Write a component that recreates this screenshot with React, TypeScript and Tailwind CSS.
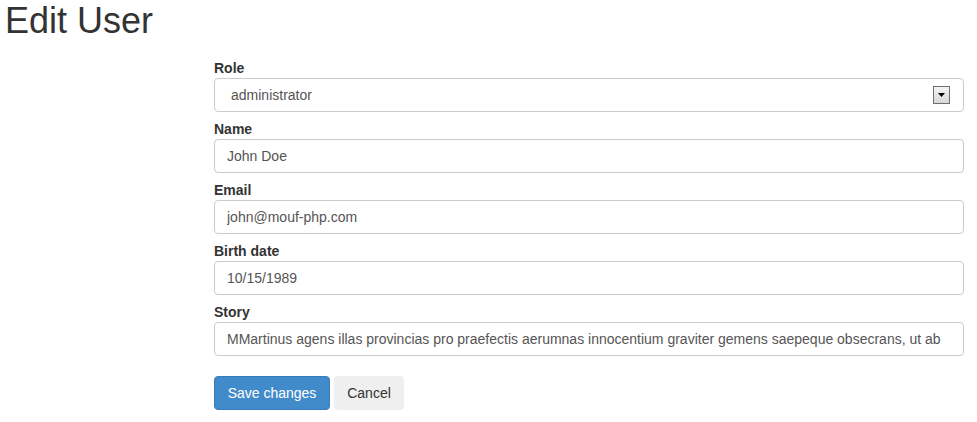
const fields = [
  { label: 'Name', value: 'John Doe' },
  { label: 'Email', value: 'john@mouf-php.com' },
  { label: 'Birth date', value: '10/15/1989' },
  {
    label: 'Story',
    value:
      'MMartinus agens illas provincias pro praefectis aerumnas innocentium graviter gemens saepeque obsecrans, ut ab',
  },
]

export default function App() {
  return (
    <div className="min-h-[422px] w-[977px] bg-white font-['Liberation_Sans',Arial,sans-serif] text-[14px] text-[#333]">
      {/* Header */}
      <h1 className="ml-[5px] pt-[1px] text-[36px] leading-[40px] font-normal text-[#333]">Edit User</h1>

      <form className="mt-[17px] ml-[214px] w-[750px]">
        {/* Role */}
        <div className="mb-[7px]">
          <label className="block h-[20px] text-[14px] leading-[20px] font-bold">Role</label>
          <div className="flex h-[34px] items-center justify-between rounded-[4px] border border-[#ccc] pr-[13px] pl-[16px] text-[#555]">
            <span>administrator</span>
            <span className="flex h-[18px] w-[17px] items-center justify-center border border-[#707070] bg-gradient-to-b from-[#f4f4f4] to-[#d8d8d8]">
              <svg width="7" height="4" viewBox="0 0 7 4">
                <path d="M0 0h7L3.5 4z" fill="#000" />
              </svg>
            </span>
          </div>
        </div>

        {fields.map((f) => (
          <div key={f.label} className="mb-[7px]">
            <label className="block h-[20px] text-[14px] leading-[20px] font-bold">{f.label}</label>
            <input
              readOnly
              value={f.value}
              className="block h-[34px] w-full rounded-[4px] border border-[#ccc] px-[12px] text-[14px] text-[#555] outline-none"
            />
          </div>
        ))}

        {/* Actions */}
        <div className="mt-[20px] flex gap-[4px]">
          <button
            type="button"
            className="h-[34px] w-[116px] rounded-[4px] border border-[#357ebd] bg-[#428bca] text-[14px] text-white"
          >
            Save changes
          </button>
          <button type="button" className="h-[34px] w-[70px] rounded-[4px] bg-[#efefef] text-[14px] text-[#333]">
            Cancel
          </button>
        </div>
      </form>
    </div>
  )
}
